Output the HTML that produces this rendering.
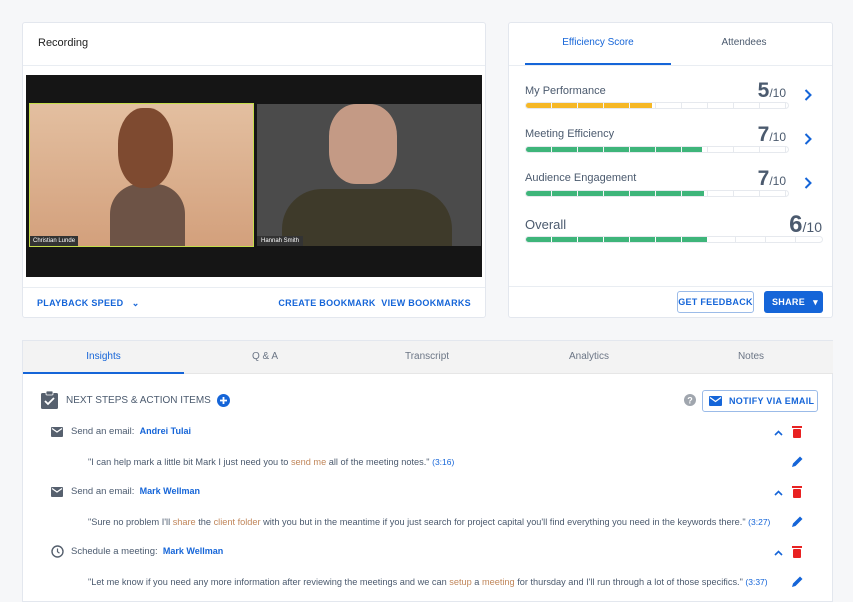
<!DOCTYPE html>
<html><head><style>
*{box-sizing:border-box;margin:0;padding:0}
body{width:853px;height:600px;background:#f6f7f9;font-family:"Liberation Sans",sans-serif;position:relative;overflow:hidden;color:#4a5568}
.card{position:absolute;background:#fff;border:1px solid #e3e7ee;border-radius:3px}
.abs{position:absolute;white-space:nowrap}
.blue{color:#1565d8}
.lbl{position:absolute;font-size:11px;color:#4b5a6e}
.bar{position:absolute;left:16px;width:264px;height:7px;border:1px solid #e6e9ee;border-radius:4px;overflow:hidden;background:
 repeating-linear-gradient(90deg,#fff 0 25px,#e6e9ee 25px 26px)}
.fill{height:100%;background:repeating-linear-gradient(90deg,var(--c) 0 25px,rgba(255,255,255,.6) 25px 26px)}
.score{position:absolute;right:46px;font-size:21px;font-weight:bold;color:#4b5a6e}
.score small{font-size:12px;font-weight:normal}
.chev{position:absolute;left:295px}
.btn{font-size:9px;font-weight:bold;letter-spacing:.3px}
.row{position:absolute;font-size:9.5px;color:#4b5a6e;white-space:nowrap}
.q{position:absolute;left:65px;font-size:9.2px;color:#4b5a6e;white-space:nowrap}
.o{color:#c0865a}
.ts{color:#1565d8}
.tab{position:absolute;top:0;height:33px;line-height:32px;font-size:10px;color:#6b7585;text-align:center}
</style></head><body>

<div class="card" style="left:22px;top:22px;width:464px;height:296px">
 <div class="abs" style="left:15px;top:14px;font-size:11px;color:#222">Recording</div>
 <div class="abs" style="left:0;top:42px;width:462px;border-top:1px solid #e9edf2"></div>
 <div class="abs" style="left:3px;top:52px;width:456px;height:202px;background:#151515">
  <div class="abs" style="left:3px;top:28px;width:225px;height:144px;border:1.5px solid #c4dc4a;background:linear-gradient(180deg,#e3bfa0,#d3a07c);overflow:hidden">
   <div class="abs" style="left:80px;top:80px;width:75px;height:70px;background:#6d5346;border-radius:30px 30px 0 0"></div>
   <div class="abs" style="left:88px;top:4px;width:55px;height:80px;background:#7e4a30;border-radius:45%"></div>
   <div class="abs" style="left:0;bottom:0;background:#333;color:#fff;font-size:6px;padding:2px 3px">Christian Lunde</div>
  </div>
  <div class="abs" style="left:231px;top:29px;width:224px;height:142px;background:#4b4b4b;overflow:hidden">
   <div class="abs" style="left:72px;top:0;width:68px;height:80px;background:#c49a85;border-radius:40%"></div>
   <div class="abs" style="left:25px;top:85px;width:170px;height:67px;background:#3e3a2a;border-radius:40px 40px 0 0"></div>
   <div class="abs" style="left:0;bottom:0;background:#333;color:#fff;font-size:6px;padding:2px 4px">Hannah Smith</div>
  </div>
 </div>
 <div class="abs" style="left:0;top:264px;width:462px;border-top:1px solid #e9edf2"></div>
 <div class="abs btn blue" style="left:14px;top:275px">PLAYBACK SPEED &nbsp; ⌄</div>
 <div class="abs btn blue" style="right:14px;top:275px">CREATE BOOKMARK &nbsp;VIEW BOOKMARKS</div>
</div>

<div class="card" style="left:508px;top:22px;width:325px;height:296px">
 <div class="abs" style="left:16px;top:14px;width:146px;text-align:center;font-size:10px;color:#1565d8">Efficiency Score</div>
 <div class="abs" style="left:170px;top:14px;width:130px;text-align:center;font-size:10px;color:#4b5a6e">Attendees</div>
 <div class="abs" style="left:0;top:42px;width:323px;border-top:1px solid #e9edf2"></div>
 <div class="abs" style="left:16px;top:40px;width:146px;height:2px;background:#1565d8"></div>

 <div class="lbl" style="left:16px;top:62px">My Performance</div>
 <div class="score" style="top:56px">5<small>/10</small></div>
 <svg class="chev" style="top:66px" width="8" height="12"><path d="M1.5 1l5 5-5 5" stroke="#1565d8" stroke-width="2" fill="none"/></svg>
 <div class="bar" style="top:79px"><div class="fill" style="width:48%;--c:#f6b826"></div></div>

 <div class="lbl" style="left:16px;top:105px">Meeting Efficiency</div>
 <div class="score" style="top:100px">7<small>/10</small></div>
 <svg class="chev" style="top:110px" width="8" height="12"><path d="M1.5 1l5 5-5 5" stroke="#1565d8" stroke-width="2" fill="none"/></svg>
 <div class="bar" style="top:123px"><div class="fill" style="width:67%;--c:#3eb57a"></div></div>

 <div class="lbl" style="left:16px;top:149px">Audience Engagement</div>
 <div class="score" style="top:144px">7<small>/10</small></div>
 <svg class="chev" style="top:154px" width="8" height="12"><path d="M1.5 1l5 5-5 5" stroke="#1565d8" stroke-width="2" fill="none"/></svg>
 <div class="bar" style="top:167px"><div class="fill" style="width:68%;--c:#3eb57a"></div></div>

 <div class="lbl" style="left:16px;top:194px;font-size:13px">Overall</div>
 <div class="score" style="top:188px;right:10px;font-size:24px">6<small style="font-size:14px">/10</small></div>
 <div class="bar" style="top:213px;width:298px;background:repeating-linear-gradient(90deg,#fff 0 29px,#e6e9ee 29px 30px)"><div class="fill" style="width:61%;--c:#3eb57a"></div></div>

 <div class="abs" style="left:0;top:263px;width:323px;border-top:1px solid #e9edf2"></div>
 <div class="abs btn blue" style="left:168px;top:268px;width:77px;height:22px;border:1px solid #9bbbe8;border-radius:3px;text-align:center;line-height:20px">GET FEEDBACK</div>
 <div class="abs btn" style="left:255px;top:268px;width:59px;height:22px;background:#1565d8;color:#fff;border-radius:3px;line-height:22px;padding-left:8px">SHARE <span style="position:absolute;right:5px">▾</span></div>
</div>

<div class="card" style="left:22px;top:340px;width:811px;height:262px;border-radius:0">
 <div class="abs" style="left:0;top:0;width:810px;height:33px;background:#f3f3f3;border-bottom:1px solid #e6e6e6"></div>
 <div class="tab" style="left:0;width:161px;color:#1565d8">Insights</div>
 <div class="abs" style="left:0;top:31px;width:161px;height:2px;background:#1565d8"></div>
 <div class="tab" style="left:161px;width:162px">Q &amp; A</div>
 <div class="tab" style="left:323px;width:162px">Transcript</div>
 <div class="tab" style="left:485px;width:162px">Analytics</div>
 <div class="tab" style="left:647px;width:162px">Notes</div>

 <svg class="abs" style="left:18px;top:50px" width="17" height="18" viewBox="0 0 17 18"><rect x="0" y="2" width="17" height="16" rx="1.5" fill="#56606e"/><rect x="5" y="0" width="7" height="4" rx="1" fill="#56606e" stroke="#fff" stroke-width=".8"/><path d="M4 10l3 3 6-6" stroke="#fff" stroke-width="1.8" fill="none"/></svg>
 <div class="abs" style="left:43px;top:54px;font-size:10px;color:#4b5a6e">NEXT STEPS &amp; ACTION ITEMS</div>
 <svg class="abs" style="left:194px;top:53px" width="13" height="13"><circle cx="6.5" cy="6.5" r="6.5" fill="#1565d8"/><path d="M6.5 3v7M3 6.5h7" stroke="#fff" stroke-width="1.8"/></svg>

 <svg class="abs" style="left:661px;top:53px" width="12" height="12"><circle cx="6" cy="6" r="6" fill="#a0a6ae"/><text x="6" y="9.5" font-size="9" font-weight="bold" fill="#fff" text-anchor="middle" font-family="Liberation Sans">?</text></svg>
 <div class="abs btn blue" style="left:679px;top:49px;width:116px;height:22px;border:1px solid #9bbbe8;border-radius:3px;line-height:20px;padding-left:26px">NOTIFY VIA EMAIL</div>
 <svg class="abs" style="left:686px;top:55px" width="13" height="10"><rect width="13" height="10" rx="1" fill="#1565d8"/><path d="M1 1.5l5.5 4 5.5-4" stroke="#fff" stroke-width="1.3" fill="none"/></svg>

 <svg class="abs" style="left:28px;top:86px" width="12" height="10"><rect width="12" height="10" rx="1" fill="#56606e"/><path d="M1 1.5l5 3.5 5-3.5" stroke="#fff" stroke-width="1.2" fill="none"/></svg>
 <div class="row" style="left:48px;top:85px">Send an email: &nbsp;<b class="blue" style="font-size:9px">Andrei Tulai</b></div>
 <div class="q" style="top:116px">"I can help mark a little bit Mark I just need you to <span class="o">send me</span> all of the meeting notes." <span class="ts" style="font-size:8.5px">(3:16)</span></div>

 <svg class="abs" style="left:28px;top:146px" width="12" height="10"><rect width="12" height="10" rx="1" fill="#56606e"/><path d="M1 1.5l5 3.5 5-3.5" stroke="#fff" stroke-width="1.2" fill="none"/></svg>
 <div class="row" style="left:48px;top:145px">Send an email: &nbsp;<b class="blue" style="font-size:9px">Mark Wellman</b></div>
 <div class="q" style="top:176px">"Sure no problem I'll <span class="o">share</span> the <span class="o">client folder</span> with you but in the meantime if you just search for project capital you'll find everything you need in the keywords there." <span class="ts" style="font-size:8.5px">(3:27)</span></div>

 <svg class="abs" style="left:28px;top:204px" width="13" height="13"><circle cx="6.5" cy="6.5" r="5.5" stroke="#56606e" stroke-width="1.4" fill="none"/><path d="M6.5 3.5v3.2l2 1.5" stroke="#56606e" stroke-width="1.2" fill="none"/></svg>
 <div class="row" style="left:48px;top:205px">Schedule a meeting: &nbsp;<b class="blue" style="font-size:9px">Mark Wellman</b></div>
 <div class="q" style="top:236px">"Let me know if you need any more information after reviewing the meetings and we can <span class="o">setup</span> a <span class="o">meeting</span> for thursday and I'll run through a lot of those specifics." <span class="ts" style="font-size:8.5px">(3:37)</span></div>

 <svg class="abs" style="left:751px;top:89px" width="9" height="6"><path d="M1 5l3.5-3.5L8 5" stroke="#1565d8" stroke-width="1.6" fill="none"/></svg>
 <svg class="abs" style="left:769px;top:85px" width="10" height="12"><rect x="0" y="0" width="10" height="2" fill="#e82222"/><rect x="1" y="3" width="8" height="9" rx="1" fill="#e82222"/></svg>
 <svg class="abs" style="left:768px;top:114px" width="13" height="13"><path d="M1 12l1-3.5 7-7 2.5 2.5-7 7z" fill="#1565d8"/></svg>
 <svg class="abs" style="left:751px;top:149px" width="9" height="6"><path d="M1 5l3.5-3.5L8 5" stroke="#1565d8" stroke-width="1.6" fill="none"/></svg>
 <svg class="abs" style="left:769px;top:145px" width="10" height="12"><rect x="0" y="0" width="10" height="2" fill="#e82222"/><rect x="1" y="3" width="8" height="9" rx="1" fill="#e82222"/></svg>
 <svg class="abs" style="left:768px;top:174px" width="13" height="13"><path d="M1 12l1-3.5 7-7 2.5 2.5-7 7z" fill="#1565d8"/></svg>
 <svg class="abs" style="left:751px;top:209px" width="9" height="6"><path d="M1 5l3.5-3.5L8 5" stroke="#1565d8" stroke-width="1.6" fill="none"/></svg>
 <svg class="abs" style="left:769px;top:205px" width="10" height="12"><rect x="0" y="0" width="10" height="2" fill="#e82222"/><rect x="1" y="3" width="8" height="9" rx="1" fill="#e82222"/></svg>
 <svg class="abs" style="left:768px;top:234px" width="13" height="13"><path d="M1 12l1-3.5 7-7 2.5 2.5-7 7z" fill="#1565d8"/></svg>
</div>
</body></html>
